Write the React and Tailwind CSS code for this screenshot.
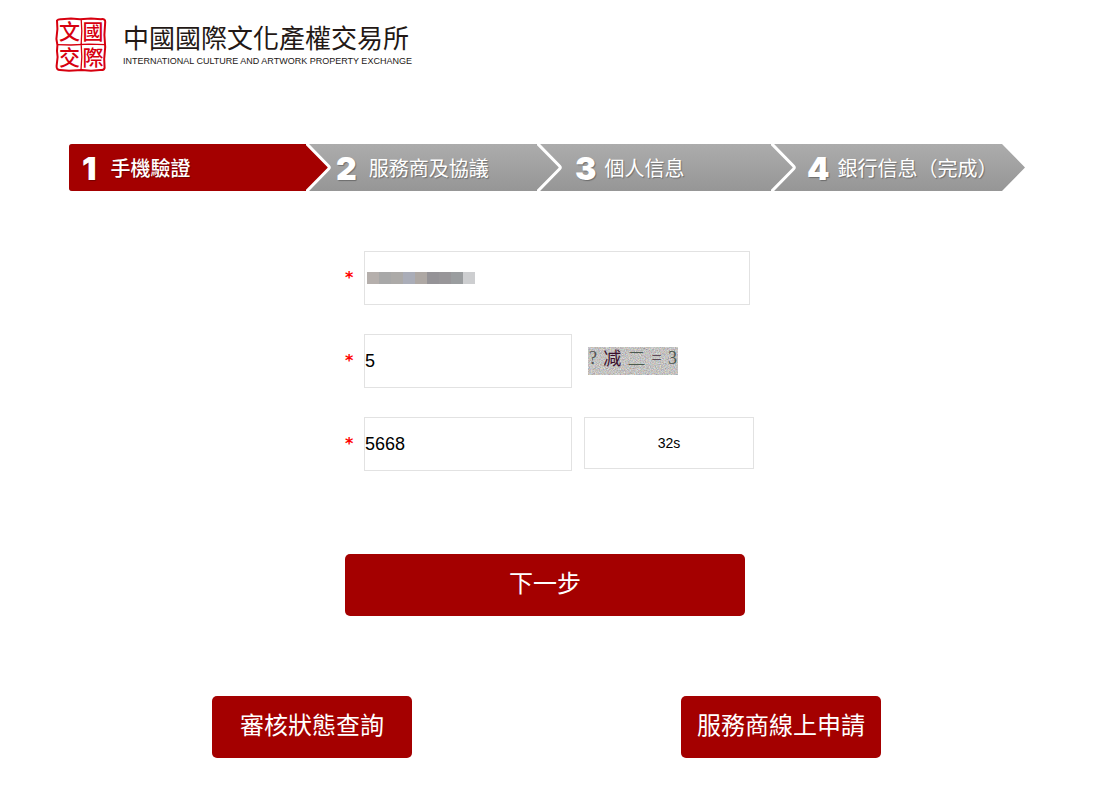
// pages/Register.jsx
import { useState } from 'react';
import clsx from 'clsx';

const STEPS = [
  { num: 1, label: '手機驗證', pad: 'pl-[13px] gap-3.5' },
  { num: 2, label: '服務商及協議', pad: 'pl-1 gap-3' },
  { num: 3, label: '個人信息', pad: 'pl-3 gap-2' },
  { num: 4, label: '銀行信息（完成）', pad: 'pl-2.5 gap-2' },
];

const MASK = [
  'bg-[#b5afac]',
  'bg-[#a8a8a8]',
  'bg-[#acaaa8]',
  'bg-[#aaadb8]',
  'bg-[#aea8a4]',
  'bg-[#959397]',
  'bg-[#989699]',
  'bg-[#9a9d9f]',
  'bg-[#cdced0]',
];

const fieldClass = 'h-[54px] border border-[#e2e2e2] bg-white text-lg text-black outline-none';
const buttonClass = 'h-[62px] rounded-[5px] bg-[#a40000] pb-0.5 text-2xl text-white hover:bg-[#8c0000]';

function Seal() {
  return (
    <svg width="52" height="55" viewBox="0 0 52 55" fill="none" stroke="#d7000f" aria-hidden="true">
      <path d="M2 3.5 Q3 2 6 2.2 L16 1.4 L25 2.2 L36 1.5 L46 2.2 Q50.5 1.5 50.2 5 L49.4 18 L50.2 30 L49.2 42 L49.6 51 Q49 53.5 45 53 L36 53.8 L27 53 L14 53.8 L5 53 Q1.4 53 1.6 49 L2.6 40 L2 34 L2.4 28 L1.4 22 L2.4 12 Z" strokeWidth="2" />
      <path d="M26.2 2 L26.8 14 L26.2 27 L26.8 40 L26 53 M2 27.6 L16 28 L34 27.2 L50 27.6" strokeWidth="1.3" />
      <g fill="#d7000f" stroke="none" fontFamily='"Noto Sans CJK TC", sans-serif' fontWeight="500" fontSize="21" textAnchor="middle">
        <text x="14.5" y="22">文</text>
        <text x="38" y="22">國</text>
        <text x="14.5" y="48">交</text>
        <text x="38" y="48">際</text>
      </g>
    </svg>
  );
}

// Flecha blanca entre pasos
function Chevron({ active, last }) {
  if (last) {
    return (
      <svg width="23" height="47" viewBox="0 0 23 47" className="shrink-0">
        <path d="M0 0 H23 V47 H0 L23 23.5 Z" fill="#fff" />
      </svg>
    );
  }
  return (
    <svg width="26" height="47" viewBox="0 0 26 47" className="shrink-0">
      {active && <path d="M0 0 L24 23.5 L0 47 Z" fill="#a40000" />}
      <path d="M0 -1 L22.5 22 Q24 23.5 22.5 25 L0 48" fill="none" stroke="#fff" strokeWidth="3" />
    </svg>
  );
}

function Captcha() {
  return (
    <div className="relative ml-4 flex h-7 w-[90px] items-start justify-between bg-[#c8c4c6] px-px">
      <svg className="absolute inset-0" width="90" height="28" aria-hidden="true">
        <filter id="noise" x="0" y="0" width="100%" height="100%" colorInterpolationFilters="sRGB">
          <feTurbulence type="fractalNoise" baseFrequency="0.8" numOctaves="2" seed="4" />
          <feColorMatrix values="0.4 0.15 0 0 0.49  0.1 0.4 0.1 0 0.46  0 0.15 0.4 0 0.48  0 0 0 0 1" />
        </filter>
        <rect width="90" height="28" filter="url(#noise)" />
      </svg>
      <span className="relative font-['Liberation_Serif',serif] text-lg/[22px] text-[#555]">?</span>
      <span className="relative font-['Noto_Sans_CJK_SC',sans-serif] text-lg/5 text-[#3b0f2c]">减</span>
      <span className="relative font-['Noto_Sans_CJK_SC',sans-serif] text-lg/5 font-light text-[#4c5a50]">二</span>
      <span className="relative font-['Liberation_Serif',serif] text-lg/[22px] text-[#5c4a58]">=</span>
      <span className="relative font-['Liberation_Serif',serif] text-lg/[22px] text-[#4c5a50]">3</span>
    </div>
  );
}

function Row({ id, label, children }) {
  return (
    <div className="flex items-center">
      <label htmlFor={id} aria-label={label} className="w-[19px] shrink-0 font-['DejaVu_Sans',sans-serif] text-base font-bold text-[#ff0000]">*</label>
      {children}
    </div>
  );
}

export default function App() {
  const [phone, setPhone] = useState('');
  const [captcha, setCaptcha] = useState('5');
  const [code, setCode] = useState('5668');

  return (
    <div className="min-h-screen bg-white pb-11 font-['Liberation_Sans','Noto_Sans_CJK_TC',sans-serif]">
      <header className="flex items-start gap-4 pt-[17px] pl-[55px]">
        <Seal />
        <div className="pt-1 text-[#231815]">
          <h1 className="font-['Noto_Sans_CJK_TC',sans-serif] text-[26px]/8 font-normal">中國國際文化產權交易所</h1>
          <p className="pt-0.5 text-[9px]/3">INTERNATIONAL CULTURE AND ARTWORK PROPERTY EXCHANGE</p>
        </div>
      </header>

      {/* Pasos */}
      <ol className="mt-18 mr-[85px] ml-[69px] grid grid-cols-[263fr_231fr_234fr_228fr] overflow-hidden rounded-l-[3px] bg-linear-to-b from-[#acacac] to-[#969696] text-white">
        {STEPS.map((s, i) => (
          <li key={s.num} className="flex h-[47px]" aria-current={i === 0 ? 'step' : undefined}>
            <div className={clsx('flex min-w-0 flex-1 items-center whitespace-nowrap', s.pad, i === 0 && 'bg-[#a40000]')}>
              <span className="pt-0.5 font-['Inter',sans-serif] text-[32px]/8 font-black text-shadow-[1px_1px_1px_rgb(0_0_0/0.3)]">{s.num}</span>
              <span className={clsx("font-['Noto_Sans_CJK_TC',sans-serif] text-xl text-shadow-[1px_1px_1px_rgb(0_0_0/0.3)]", i === 0 && 'font-medium')}>{s.label}</span>
            </div>
            <Chevron active={i === 0} last={i === STEPS.length - 1} />
          </li>
        ))}
      </ol>

      <main className="flex flex-col items-center pr-2.5">
        <form className="mt-15 flex w-[410px] flex-col gap-[29px]" onSubmit={(e) => e.preventDefault()}>
          <Row id="phone" label="手機號碼">
            <div className="relative">
              <input id="phone" type="tel" value={phone} onChange={(e) => setPhone(e.target.value)} className={`${fieldClass} block w-[386px]`} />
              {/* Número oculto */}
              {!phone && (
                <div className="pointer-events-none absolute inset-y-0 left-[3px] flex items-center">
                  {MASK.map((c, i) => <span key={i} className={`h-3 w-3 ${c}`} />)}
                </div>
              )}
            </div>
          </Row>
          <Row id="captcha" label="驗證碼">
            <input id="captcha" type="text" value={captcha} onChange={(e) => setCaptcha(e.target.value)} className={`${fieldClass} w-52`} />
            <Captcha />
          </Row>
          <Row id="code" label="短信驗證碼">
            <input id="code" type="text" value={code} onChange={(e) => setCode(e.target.value)} className={`${fieldClass} w-52`} />
            <button type="button" className="ml-3 h-[52px] w-[170px] self-start border border-[#e2e2e2] text-sm text-black">32s</button>
          </Row>
          <button type="submit" className={`${buttonClass} mt-[54px] w-[400px]`}>下一步</button>
        </form>

        <div className="mt-20 flex w-[676px] justify-between pr-[7px]">
          <button type="button" className={`${buttonClass} w-50`}>審核狀態查詢</button>
          <button type="button" className={`${buttonClass} w-50`}>服務商線上申請</button>
        </div>
      </main>
    </div>
  );
}
